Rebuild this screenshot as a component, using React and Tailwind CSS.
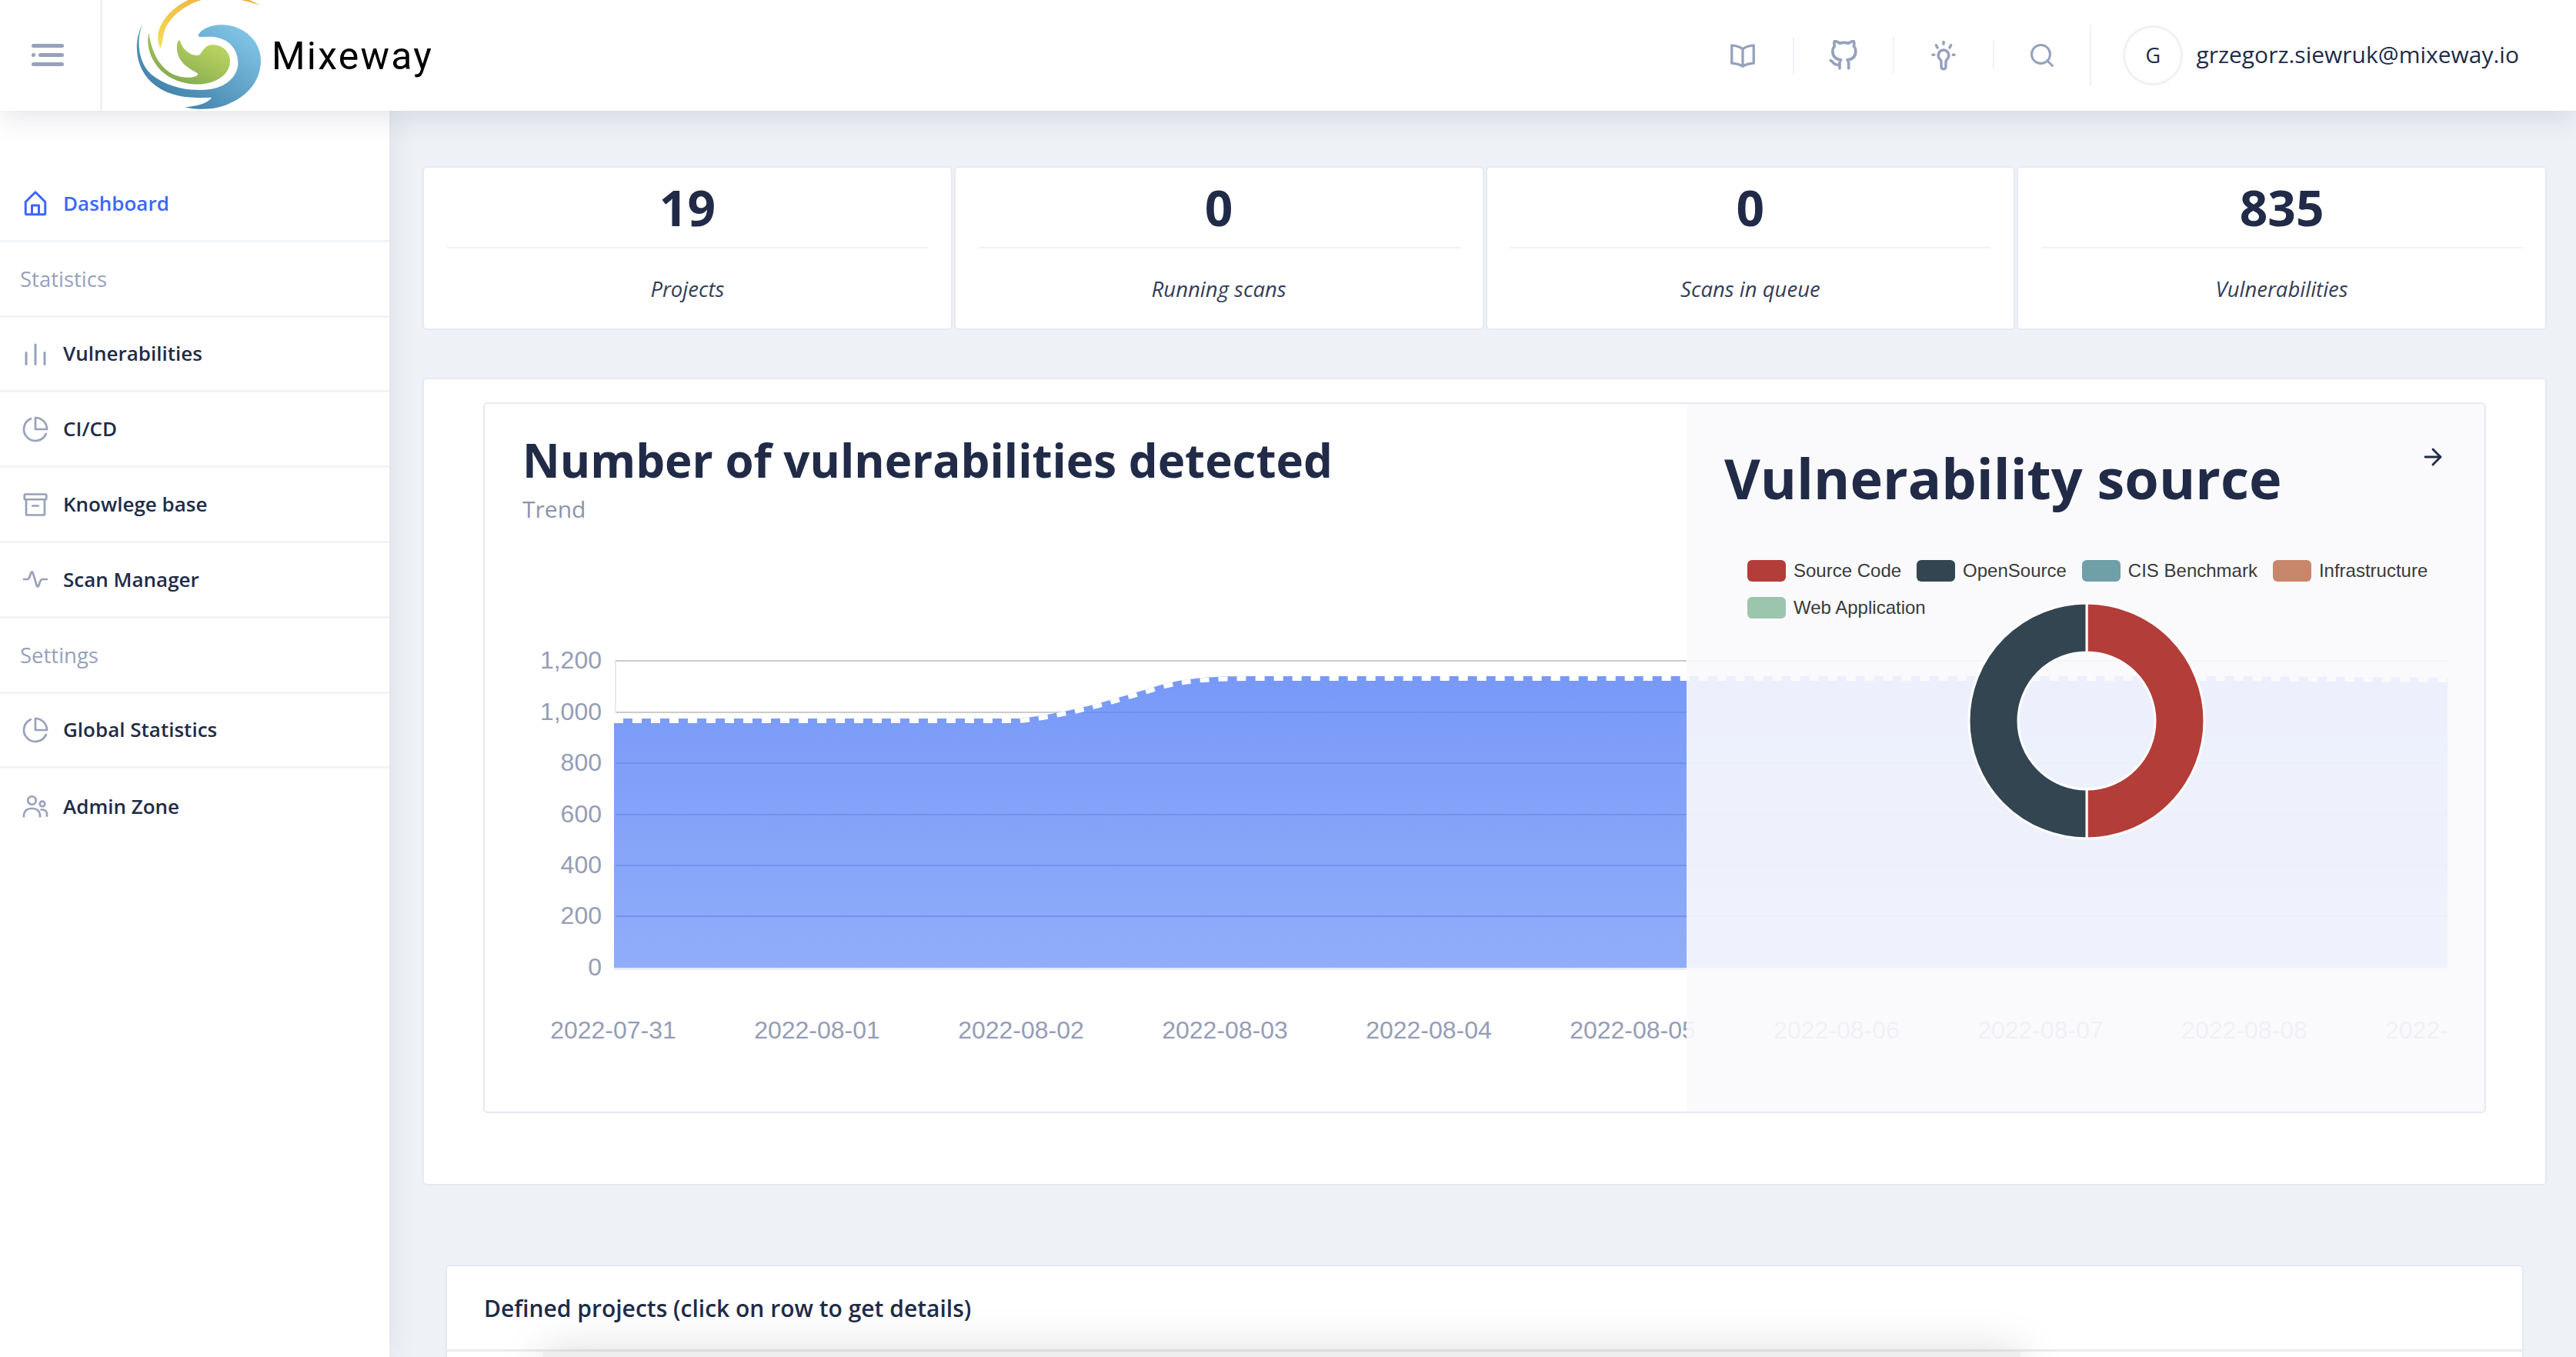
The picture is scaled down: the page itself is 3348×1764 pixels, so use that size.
import { ArrowRight } from "lucide-react";

const stats = [
  { value: "19", label: "Projects" },
  { value: "0", label: "Running scans" },
  { value: "0", label: "Scans in queue" },
  { value: "835", label: "Vulnerabilities" },
];

const yTicks = [
  { label: "1,200", y: 858 },
  { label: "1,000", y: 925 },
  { label: "800", y: 991 },
  { label: "600", y: 1058 },
  { label: "400", y: 1124 },
  { label: "200", y: 1190 },
  { label: "0", y: 1257 },
];

const xTicks = [
  { label: "2022-07-31", x: 797 },
  { label: "2022-08-01", x: 1062 },
  { label: "2022-08-02", x: 1327 },
  { label: "2022-08-03", x: 1592 },
  { label: "2022-08-04", x: 1857 },
  { label: "2022-08-05", x: 2122 },
  { label: "2022-08-06", x: 2387 },
  { label: "2022-08-07", x: 2652 },
  { label: "2022-08-08", x: 2917 },
];

const legend = [
  { label: "Source Code", className: "bg-[#b33d38]" },
  { label: "OpenSource", className: "bg-[#344552]" },
  { label: "CIS Benchmark", className: "bg-[#6fa0a8]" },
  { label: "Infrastructure", className: "bg-[#c8866b]" },
  { label: "Web Application", className: "bg-[#9cc5ad]" },
];

const Icon = ({ children, size = 36, sw = 2, className = "text-[#97a1bb]" }) => (
  <svg width={size} height={size} viewBox="0 0 24 24" fill="none" stroke="currentColor" strokeWidth={sw} strokeLinecap="round" strokeLinejoin="round" className={className}>
    {children}
  </svg>
);

const HomeIcon = () => (
  <Icon className="text-[#3d66fb]">
    <path d="M12 2.5 L3.5 11 V21 a.8 .8 0 0 0 .8 .8 H19.7 a.8 .8 0 0 0 .8 -.8 V11 Z" />
    <path d="M9 21.5 V14 H15 V21.5" />
  </Icon>
);
const BarsIcon = () => (
  <Icon>
    <path d="M12 21V4M20 21v-10M4 21v-10" />
  </Icon>
);
const PieIcon = () => (
  <Icon sw={1.8}>
    <path d="M21.2 15.9A10 10 0 1 1 8 2.8" />
    <path d="M22 12A10 10 0 0 0 12 2v10z" />
  </Icon>
);
const ArchiveIcon = () => (
  <Icon sw={1.8}>
    <rect x="2.5" y="3" width="19" height="4.5" rx="1" />
    <path d="M4 7.5V20a1 1 0 0 0 1 1h14a1 1 0 0 0 1-1V7.5M9.5 13h5" />
  </Icon>
);
const ActivityIcon = () => (
  <Icon sw={1.8}>
    <path d="M2 12h3c1.500 0 2-2 3-5c.6-2 1.400-2 2 0l3 10c.6 2 1.400 2 2 0l1.300-3.500c.5-1.200 1.200-1.500 2.200-1.500h3.500" />
  </Icon>
);
const UsersIcon = () => (
  <Icon sw={1.8}>
    <circle cx="9" cy="7" r="3.500" />
    <circle cx="18" cy="10" r="2.200" />
    <path d="M2 21v-1.500a6 6 0 0 1 6-5.500h2a6 6 0 0 1 6 5.500V21M17 15h1.500a4 4 0 0 1 3.500 4v1.500" />
  </Icon>
);

const navRows = [
  { label: "Dashboard", icon: HomeIcon, active: true },
  { label: "Statistics", heading: true },
  { label: "Vulnerabilities", icon: BarsIcon },
  { label: "CI/CD", icon: PieIcon },
  { label: "Knowlege base", icon: ArchiveIcon },
  { label: "Scan Manager", icon: ActivityIcon },
  { label: "Settings", heading: true },
  { label: "Global Statistics", icon: PieIcon },
  { label: "Admin Zone", icon: UsersIcon },
];

const Logo = () => (
  <svg width="220" height="144" viewBox="0 0 660 432" className="shrink-0">
    <defs>
      <linearGradient id="logoBlue" x1="0.95" y1="0.15" x2="0.2" y2="0.9">
        <stop offset="0" stopColor="#80c4e5" />
        <stop offset="1" stopColor="#3f7ea8" />
      </linearGradient>
      <linearGradient id="logoGreen" x1="0.85" y1="0.3" x2="0.3" y2="1">
        <stop offset="0" stopColor="#b7d25d" />
        <stop offset="1" stopColor="#84a852" />
      </linearGradient>
      <linearGradient id="logoYellow" x1="0" y1="1" x2="0.6" y2="0">
        <stop offset="0" stopColor="#f5de50" />
        <stop offset="1" stopColor="#edb043" />
      </linearGradient>
    </defs>
    <path fill="url(#logoBlue)" d="M75 95C40 160 45 260 110 320C170 375 250 385 345 380C330 405 280 415 240 418C290 430 350 428 400 410C480 380 537 320 537 235C537 160 470 97 385 97C340 97 300 115 293 140C300 148 330 140 360 145C420 155 450 200 448 250C445 300 400 340 340 348C260 358 170 340 110 290C60 245 50 160 75 95Z" />
    <path fill="url(#logoGreen)" d="M100 128C85 190 120 270 190 305C240 330 300 335 345 320C395 305 418 270 417 235C415 200 385 175 350 175C320 175 310 200 300 212C280 225 235 205 222 160C215 150 208 170 210 195C215 240 250 265 290 285C295 292 285 300 260 302C190 305 120 260 100 128Z" />
    <path fill="url(#logoYellow)" d="M145 188C128 150 135 110 165 70C200 25 260 -15 350 -30C420 -35 490 -5 535 22C480 0 400 -15 330 -5C260 5 190 55 165 110C155 135 155 165 145 188Z" />
  </svg>
);

const Header = () => (
  <header className="relative z-20 flex h-[144px] shrink-0 items-center bg-white shadow-[0_8px_36px_rgba(40,50,80,0.13)]">
    <div className="flex h-full w-[133px] shrink-0 items-center border-r-[3px] border-[#eef1f6] pl-[41px]">
      <svg width="44" height="30" viewBox="0 0 44 30" fill="#97a1bb">
        <rect x="0" y="0" width="42" height="5" rx="2.500" />
        <rect x="0" y="12" width="5" height="5" rx="2.500" />
        <rect x="9" y="12" width="33" height="5" rx="2.500" />
        <rect x="0" y="24" width="42" height="5" rx="2.500" />
      </svg>
    </div>
    <div className="ml-[27px] flex items-center">
      <Logo />
      <span className="-ml-[27px] mt-[1px] font-['Roboto',sans-serif] text-[50px] font-normal leading-none tracking-[2.200px] text-black">Mixeway</span>
    </div>
    <div className="ml-auto flex h-full items-center">
      <div className="flex w-[130px] justify-center">
        <Icon sw={2.200}>
          <path d="M12 6.500C9.500 4.500 6 3.500 2.500 3.200V18.800C6 19 9.500 20 12 21.500C14.500 20 18 19 21.500 18.800V3.200C18 3.500 14.500 4.500 12 6.500ZM12 6.500V21.500" />
        </Icon>
      </div>
      <div className="h-[48px] w-[2px] bg-[#eef1f6]" />
      <div className="flex w-[128px] justify-center">
        <Icon sw={2.200} size={40}>
          <path d="M9 19c-5 1.500-5-2.500-7-3m14 6v-3.870a3.370 3.370 0 0 0-.94-2.610c3.140-.35 6.440-1.540 6.440-7A5.440 5.440 0 0 0 20 4.770 5.070 5.070 0 0 0 19.910 1S18.730.65 16 2.480a13.380 13.380 0 0 0-7 0C6.270.65 5.090 1 5.090 1A5.070 5.070 0 0 0 5 4.770a5.440 5.440 0 0 0-1.500 3.780c0 5.420 3.300 6.610 6.440 7A3.370 3.370 0 0 0 9 18.130V22" />
        </Icon>
      </div>
      <div className="h-[48px] w-[2px] bg-[#eef1f6]" />
      <div className="flex w-[128px] justify-center">
        <Icon sw={2} size={42}>
          <path d="M12 8a4 4 0 0 0-2.500 7c.6.6.8 1.200.8 2v3.500a1.700 1.700 0 0 0 3.400 0V17c0-.8.2-1.400.8-2A4 4 0 0 0 12 8Z" />
          <path d="M12 2v1.500M6.500 4.500l1 1.800M17.500 4.500l-1 1.800M4 11.500h1M19 11.500h1" />
        </Icon>
      </div>
      <div className="h-[36px] w-[2px] bg-[#eef1f6]" />
      <div className="flex w-[124px] justify-center">
        <Icon sw={2} size={36}>
          <circle cx="11" cy="11" r="8" />
          <path d="M21 21l-4.350-4.350" />
        </Icon>
      </div>
      <div className="h-[80px] w-[2px] bg-[#eef1f6]" />
      <div className="ml-[41px] flex h-[78px] w-[78px] items-center justify-center rounded-full border-[3px] border-[#eef1f6] text-[27px] text-[#212b48]">G</div>
      <span className="mb-[3px] ml-[17px] mr-[74px] text-[30px] text-[#212b48]">grzegorz.siewruk@mixeway.io</span>
    </div>
  </header>
);

const Sidebar = () => (
  <aside className="relative z-10 w-[506px] shrink-0 bg-white pt-[73px] shadow-[0_0_36px_rgba(40,50,80,0.10)]">
    {navRows.map((row) => {
      if (row.heading) {
        return (
          <div key={row.label} className="flex h-[97.800px] items-center border-b-[3px] border-[#f0f3f7] pl-[26px] text-[27.500px] text-[#97a1bb]">
            {row.label}
          </div>
        );
      }
      const RowIcon = row.icon;
      return (
        <div key={row.label} className="flex h-[97.800px] items-center border-b-[3px] border-[#f0f3f7] pl-[28px] last:border-b-0">
          <RowIcon />
          <span className={row.active ? "ml-[18px] text-[26px] font-semibold text-[#3d66fb]" : "ml-[18px] text-[26px] font-semibold text-[#212b48]"}>{row.label}</span>
        </div>
      );
    })}
  </aside>
);

const StatCard = ({ value, label }) => (
  <div className="flex flex-col rounded-[6px] border-2 border-[#e6e9f1] bg-white px-[30px]">
    <div className="flex h-[105px] items-center justify-center border-b-2 border-[#eef1f6] text-[64px] font-bold leading-none text-[#212b48]">{value}</div>
    <div className="flex flex-1 items-center justify-center pt-[2px] text-[27.500px] italic text-[#343d58]">{label}</div>
  </div>
);

const TrendChart = () => {
  const curve = "C1400 925 1450 908 1510 890C1545 881 1575 879 1630 879L2900 879L3181 881";
  const lineCurve = "C1400 928 1450 911 1510 893C1545 884 1575 882 1630 882L2900 882L3181 884";
  const area = `M798 1258L798 934L1326 934${curve}L3181 1258Z`;
  return (
    <svg width="2598" height="700" viewBox="630 700 2598 700" className="block">
      <defs>
        <linearGradient id="areaFill" x1="0" y1="0" x2="0" y2="1">
          <stop offset="0" stopColor="#7899f8" />
          <stop offset="1" stopColor="#90adf9" />
        </linearGradient>
        <clipPath id="areaClip">
          <path d={area} />
        </clipPath>
      </defs>
      <path d="M800 859V925" stroke="#e6e9f0" strokeWidth="2" />
      {yTicks.slice(0, 2).map((tick) => (
        <path key={tick.label} d={`M800 ${tick.y + 1}H3181`} stroke="#cccccc" strokeWidth="2" />
      ))}
      <path d={area} fill="url(#areaFill)" />
      <g clipPath="url(#areaClip)">
        {yTicks.slice(1, 6).map((tick) => (
          <path key={tick.label} d={`M800 ${tick.y + 1}H3181`} stroke="#7192ec" strokeWidth="2" />
        ))}
      </g>
      <path d={`M798 937L1326 937${lineCurve}`} fill="none" stroke="#fff" strokeWidth="6" strokeDasharray="12 12" />
      <path d="M798 1259.500H3181" stroke="#dce5fb" strokeWidth="2" />
      {yTicks.map((tick) => (
        <text key={tick.label} x="782" y={tick.y} textAnchor="end" dominantBaseline="central" fill="#959db6" fontSize="32" fontFamily="'Liberation Sans', sans-serif">
          {tick.label}
        </text>
      ))}
      {xTicks.map((tick) => (
        <text key={tick.label} x={tick.x} y="1339" textAnchor="middle" dominantBaseline="central" fill="#959db6" fontSize="32" fontFamily="'Liberation Sans', sans-serif">
          {tick.label}
        </text>
      ))}
      <text x="3100" y="1339" dominantBaseline="central" fill="#959db6" fontSize="32" fontFamily="'Liberation Sans', sans-serif">
        2022-
      </text>
    </svg>
  );
};

const Donut = () => (
  <svg width="310" height="310" viewBox="-155 -155 310 310" className="block">
    <path d="M0 -153A153 153 0 0 1 0 153L0 89A89 89 0 0 0 0 -89Z" fill="#b33d38" stroke="#fff" strokeWidth="3" />
    <path d="M0 153A153 153 0 0 1 0 -153L0 -89A89 89 0 0 0 0 89Z" fill="#344552" stroke="#fff" strokeWidth="3" />
  </svg>
);

const SourcePanel = () => (
  <div className="absolute bottom-0 right-0 top-0 flex w-[1037px] flex-col rounded-r-[6px] bg-[#f9fafc]/[0.9]">
    <ArrowRight size={34} strokeWidth={2} className="absolute right-[50px] top-[52px] text-[#212b48]" />
    <h2 className="pl-[49px] pt-[43px] text-[72px] font-bold leading-[106px] text-[#212b48]">Vulnerability source</h2>
    <div className="ml-[79px] mt-[54px] flex w-[900px] flex-wrap gap-x-[20px] gap-y-[20px]">
      {legend.map((item) => (
        <div key={item.label} className="flex h-[28px] items-center font-['Liberation_Sans',sans-serif] text-[24px] text-[#3a3a3a]">
          <span className={`mr-[10px] h-[28px] w-[50px] rounded-[6px] ${item.className}`} />
          {item.label}
        </div>
      ))}
    </div>
    <div className="-mt-[22px] flex justify-center pl-[2px]">
      <Donut />
    </div>
  </div>
);

export default function App() {
  return (
    <div className="flex h-screen flex-col overflow-hidden bg-[#eef1f6] font-['Open_Sans',sans-serif]">
      <Header />
      <div className="flex min-h-0 flex-1">
        <Sidebar />
        <main className="min-w-0 flex-1 pl-[43px] pr-[38px] pt-[72px]">
          <div className="grid h-[213px] grid-cols-4 gap-[2px]">
            {stats.map((stat) => (
              <StatCard key={stat.label} value={stat.value} label={stat.label} />
            ))}
          </div>
          <section className="mt-[62px] h-[1050px] rounded-[6px] border-2 border-[#e6e9f1] bg-white pb-[92px] pl-[77px] pr-[77px] pt-[30px]">
            <div className="relative h-full rounded-[6px] border-2 border-[#e6e9f1] bg-white">
              <div className="pl-[49px] pt-[35px]">
                <h2 className="text-[60px] font-bold leading-[77px] text-[#212b48]">Number of vulnerabilities detected</h2>
                <p className="mt-[7px] text-[30px] leading-[36px] text-[#8b94ac]">Trend</p>
              </div>
              <div className="mt-[20px]">
                <TrendChart />
              </div>
              <SourcePanel />
            </div>
          </section>
          <section className="relative mx-[30px] mt-[103px] h-[200px] overflow-hidden rounded-[6px] border-2 border-[#e6e9f1] bg-white">
            <div className="flex h-[111px] items-center border-b-[3px] border-[#e9ebef] pl-[48px] text-[30px] font-semibold text-[#212b48]">
              Defined projects (click on row to get details)
            </div>
            <div className="ml-[125px] h-[60px] w-[1920px] bg-[#eeeeee] shadow-[0_0_60px_rgba(0,0,0,0.15)]" />
          </section>
        </main>
      </div>
    </div>
  );
}
